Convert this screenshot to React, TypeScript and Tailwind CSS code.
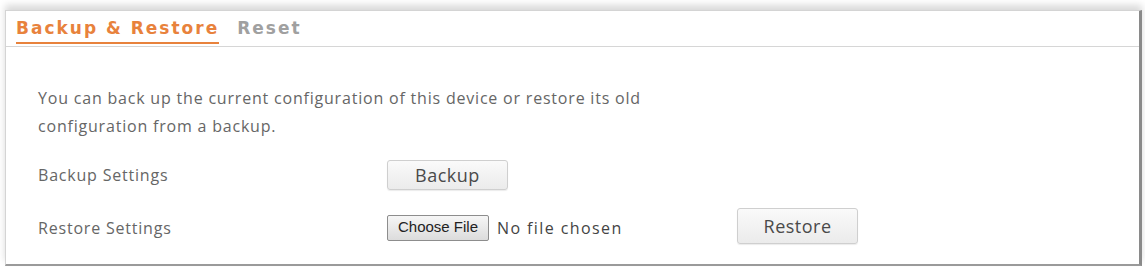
const font = { fontFamily: '"Open Sans", "Noto Sans", sans-serif' }
const tabFont = { fontFamily: '"DejaVu Sans", "Open Sans", sans-serif' }
const nativeFont = { fontFamily: '"Liberation Sans", Arial, sans-serif' }

const App = () => {
  return (
    <div className="w-[1145px] h-[267px] bg-white pt-[10px] pl-[5px] pr-[3px] pb-px" style={font}>
      <div
        className="
          h-full
          bg-white
          border-t border-l border-[#d4d4d4]
          border-r-[3px] border-r-[#8a8a8a]
          border-b-2 border-b-[#9a9a9a]
          shadow-[0_-5px_7px_rgba(0,0,0,0.15)]
        "
      >
        <div className="h-[36px] flex items-end gap-[18px] pl-[10px] border-b border-[#d6d6d6]" style={tabFont}>
          <div className="mb-[2px] text-[17px] font-bold tracking-[2px] text-[#e8823c] leading-none pb-[5px] border-b-2 border-[#e8823c]">
            Backup &amp; Restore
          </div>
          <div className="text-[17px] font-bold tracking-[2px] text-[#a0a0a0] leading-none pb-[9px]">Reset</div>
        </div>

        <div className="pl-[32px] text-[16px] tracking-[0.8px] text-[#666]">
          <p className="pt-[37px] leading-[28px]">
            You can back up the current configuration of this device or restore its old
            <br />
            configuration from a backup.
          </p>

          <div className="flex items-center h-[30px] mt-[20px]">
            <span className="w-[349px]">Backup Settings</span>
            <button className="w-[121px] h-[30px] rounded-[3px] border border-[#cfcfcf] bg-gradient-to-b from-[#fafafa] to-[#ebebeb] text-[18px] tracking-[0.5px] text-[#4a4a4a] shadow-[0_1px_1px_rgba(0,0,0,0.08)]">
              Backup
            </button>
          </div>

          <div className="flex items-center h-[36px] mt-[18px]">
            <span className="w-[349px] pt-[3px]">Restore Settings</span>
            <button
              className="mt-[3px] h-[26px] px-[10px] border border-[#8d8d8d] rounded-[2px] bg-gradient-to-b from-[#f6f6f6] to-[#dcdcdc] text-[15px] tracking-normal text-[#222]"
              style={nativeFont}
            >
              Choose File
            </button>
            <span className="ml-[8px] pt-[3px] w-[240px] tracking-[1.4px] text-[#444]">No file chosen</span>
            <button className="w-[121px] h-[36px] rounded-[3px] border border-[#cfcfcf] bg-gradient-to-b from-[#fafafa] to-[#ebebeb] text-[18px] tracking-[0.5px] text-[#4a4a4a] shadow-[0_1px_1px_rgba(0,0,0,0.08)]">
              Restore
            </button>
          </div>
        </div>
      </div>
    </div>
  )
}

export default App
